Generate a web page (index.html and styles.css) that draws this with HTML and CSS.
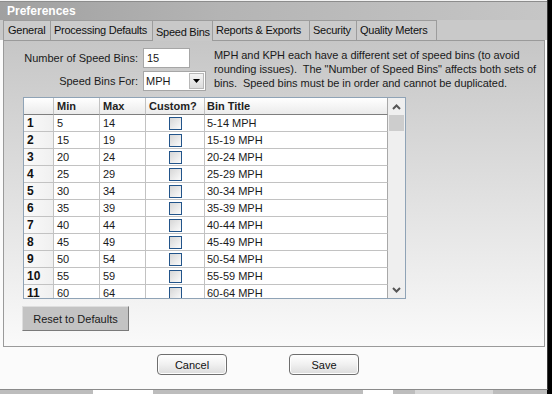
FILE: index.html
```html
<!DOCTYPE html>
<html lang="en">
<head>
    <meta charset="UTF-8">
    <title>Preferences</title>
    <link rel="stylesheet" href="styles.css">
</head>
<body>
    <div class="screen">
        <div class="dialog">
            <div class="top-edge"></div>
            <div class="titlebar">Preferences</div>

            <div class="tabs">
                <div class="tab tab-general">General</div>
                <div class="tab tab-processing">Processing Defaults</div>
                <div class="tab tab-bins selected">Speed Bins</div>
                <div class="tab tab-reports">Reports &amp; Exports</div>
                <div class="tab tab-security">Security</div>
                <div class="tab tab-quality">Quality Meters</div>
            </div>

            <div class="panel">
                <div class="settings">
                    <div class="fields">
                        <label class="field-label">Number of Speed Bins:</label>
                        <div class="textbox">15</div>
                        <label class="field-label">Speed Bins For:</label>
                        <div class="combo">
                            <span class="combo-value">MPH</span>
                            <span class="combo-btn">
                                <svg width="7" height="4" viewBox="0 0 7 4"><polygon points="0,0 7,0 3.5,4" fill="#000"/></svg>
                            </span>
                        </div>
                    </div>
                    <p class="note">
                        MPH and KPH each have a different set of speed bins (to avoid<br>
                        rounding issues).&nbsp; The "Number of Speed Bins" affects both sets of<br>
                        bins.&nbsp; Speed bins must be in order and cannot be duplicated.
                    </p>
                </div>

                <div class="grid">
                    <div class="grid-main" id="rows">
                        <div class="row head">
                            <div class="cell rowhead"></div>
                            <div class="cell">Min</div>
                            <div class="cell">Max</div>
                            <div class="cell">Custom?</div>
                            <div class="cell">Bin Title</div>
                        </div>
                    </div>
                    <div class="vscroll">
                        <div class="arrow">
                            <svg width="9" height="6" viewBox="0 0 9 6"><polyline points="1,5 4.5,1.5 8,5" fill="none" stroke="#555" stroke-width="2"/></svg>
                        </div>
                        <div class="thumb"></div>
                        <div class="track"></div>
                        <div class="arrow">
                            <svg width="9" height="6" viewBox="0 0 9 6"><polyline points="1,1 4.5,4.5 8,1" fill="none" stroke="#555" stroke-width="2"/></svg>
                        </div>
                    </div>
                </div>

                <button class="reset">Reset to Defaults</button>
            </div>

            <div class="footer">
                <button class="btn">Cancel</button>
                <button class="btn">Save</button>
            </div>
        </div>

        <div class="under">
            <span class="under-box box-a"></span>
            <span class="under-box box-b"></span>
            <span class="under-box box-c"></span>
        </div>
    </div>

    <script>
        // Build the speed bin rows (5-14, 15-19, ... 60-64)
        const rows = document.getElementById('rows');
        for (let i = 1; i <= 11; i++) {
            const min = i === 1 ? 5 : i * 5 + 5;
            const max = i * 5 + 9;
            const row = document.createElement('div');
            row.className = 'row';
            row.innerHTML =
                '<div class="cell rowhead">' + i + '</div>' +
                '<div class="cell">' + min + '</div>' +
                '<div class="cell">' + max + '</div>' +
                '<div class="cell check-cell"><span class="checkbox"></span></div>' +
                '<div class="cell">' + min + '-' + max + ' MPH</div>';
            rows.appendChild(row);
        }
    </script>
</body>
</html>
```

FILE: styles.css
```css
body {
    margin: 0;
    background: #000;
    font-family: "Liberation Sans", Arial, sans-serif;
    font-size: 11px;
    color: #1a1a1a;
    overflow: hidden;
}
.screen {
    width: 552px;
    height: 394px;
    background: #000;
    display: flex;
    flex-direction: column;
}
.dialog {
    width: 547px;
    height: 389px;
    background: #fbfbfb;
    border-right: 1px solid #3a3a3a;
    border-bottom: 1px solid #8a8a8a;
    display: flex;
    flex-direction: column;
}
.top-edge {
    height: 1px;
    background: #f2f2f2;
    border-bottom: 1px solid #8c8c8c;
}
.titlebar {
    height: 18px;
    line-height: 18px;
    padding-left: 7px;
    background: linear-gradient(90deg, #a0a0a0 0%, #b4b4b4 40%, #c6c6c6 100%);
    color: #fff;
    font-weight: bold;
    font-size: 12px;
}
.tabs {
    height: 20px;
    background: #c9c9c9;
    display: flex;
    padding-left: 3px;
}
.tab {
    box-sizing: border-box;
    height: 20px;
    padding: 3px 0 0 3px;
    border: 1px solid #9c9c9c;
    border-bottom: none;
    border-left: none;
    background: #cbcbcb;
    white-space: nowrap;
    letter-spacing: -0.25px;
    color: #111;
    overflow: hidden;
}
.tab-general { width: 48px; border-left: 1px solid #9c9c9c; padding-left: 4px; }
.tab-processing { width: 102px; }
.tab-bins { width: 60px; }
.tab-reports { width: 97px; }
.tab-security { width: 47px; }
.tab-quality { width: 80px; }
.tab.selected {
    height: 21px;
    padding-top: 5px;
    margin-bottom: -1px;
    background: #c8c8c8;
    position: relative;
}
.panel {
    height: 305px;
    margin: 0 2px 0 3px;
    border: 1px solid #9a9a9a;
    background: linear-gradient(#c6c6c6, #fafafa);
}
.settings {
    display: flex;
    padding-top: 7px;
}
.fields {
    display: grid;
    grid-template-columns: 134px 63px;
    grid-auto-rows: 20px;
    column-gap: 5px;
    row-gap: 3px;
}
.field-label {
    text-align: right;
    line-height: 20px;
}
.textbox {
    box-sizing: border-box;
    width: 47px;
    border: 1px solid #a6a6a6;
    background: #fff;
    padding-left: 3px;
    line-height: 18px;
}
.combo {
    box-sizing: border-box;
    display: flex;
    border: 1px solid #a6a6a6;
    background: #fff;
}
.combo-value {
    flex: 1;
    padding-left: 2px;
    line-height: 18px;
}
.combo-btn {
    width: 15px;
    margin: 1px;
    background: linear-gradient(#f4f4f4, #dcdcdc);
    border: 1px solid #b8b8b8;
    box-sizing: border-box;
    display: flex;
    align-items: center;
    justify-content: center;
}
.note {
    margin: 0 0 0 8px;
    line-height: 14px;
    letter-spacing: -0.05px;
}
.grid {
    display: flex;
    width: 381px;
    height: 200px;
    margin: 6px 0 0 19px;
    border: 1px solid #8fa3b6;
    background: #fff;
}
.grid-main {
    width: 364px;
    overflow: hidden;
}
.row {
    display: grid;
    grid-template-columns: 30px 46px 46px 59px 183px;
    height: 17px;
}
.cell {
    box-sizing: border-box;
    border-right: 1px solid #c2c2c2;
    border-bottom: 1px solid #c2c2c2;
    padding-left: 3px;
    line-height: 16px;
    white-space: nowrap;
}
.cell:last-child {
    padding-left: 2px;
    border-right-color: #a8a8a8;
}
.head .cell {
    background: linear-gradient(#ffffff, #ebebeb);
    border-bottom-color: #7e7e7e;
    font-weight: bold;
    color: #222;
}
.rowhead {
    background: linear-gradient(90deg, #fafafa, #f0f0f0);
    font-weight: bold;
    font-size: 12px;
    color: #111;
}
.check-cell {
    display: flex;
    align-items: center;
    justify-content: center;
    padding-left: 0;
}
.checkbox {
    box-sizing: border-box;
    width: 13px;
    height: 13px;
    border: 1px solid #22548a;
    background: linear-gradient(135deg, #d6d6d6, #fbfbfb);
}
.vscroll {
    width: 17px;
    background: #efefef;
    display: flex;
    flex-direction: column;
}
.arrow {
    height: 17px;
    display: flex;
    align-items: center;
    justify-content: center;
}
.thumb {
    height: 16px;
    margin: 0 1px;
    background: #cdcdcd;
}
.track {
    flex: 1;
}
.reset {
    display: block;
    width: 107px;
    height: 25px;
    margin: 7px 0 0 18px;
    background: #c3c3c3;
    border: 1px solid;
    border-color: #dedede #7a7a7a #7a7a7a #dedede;
    font-family: inherit;
    font-size: 11px;
    color: #1a1a1a;
    padding: 0;
}
.footer {
    height: 42px;
    display: flex;
    align-items: flex-start;
    gap: 62px;
    padding: 7px 0 0 157px;
    box-sizing: border-box;
}
.btn {
    width: 70px;
    height: 21px;
    border: 1px solid #6e6e6e;
    border-radius: 4px;
    background: linear-gradient(#ffffff, #f0f0f0 50%, #dcdcdc);
    box-shadow: inset 0 0 0 1px #fdfdfd;
    font-family: inherit;
    font-size: 11px;
    color: #111;
    padding: 0;
}
.under {
    height: 4px;
    width: 547px;
    background: #bdbdbd;
    position: relative;
}
.under-box {
    position: absolute;
    top: 0;
    height: 4px;
    background: #fff;
}
.box-a { left: 93px; width: 60px; }
.box-b { left: 363px; width: 30px; }
.box-c { left: 415px; width: 78px; background: #d8d8d8; }
```
